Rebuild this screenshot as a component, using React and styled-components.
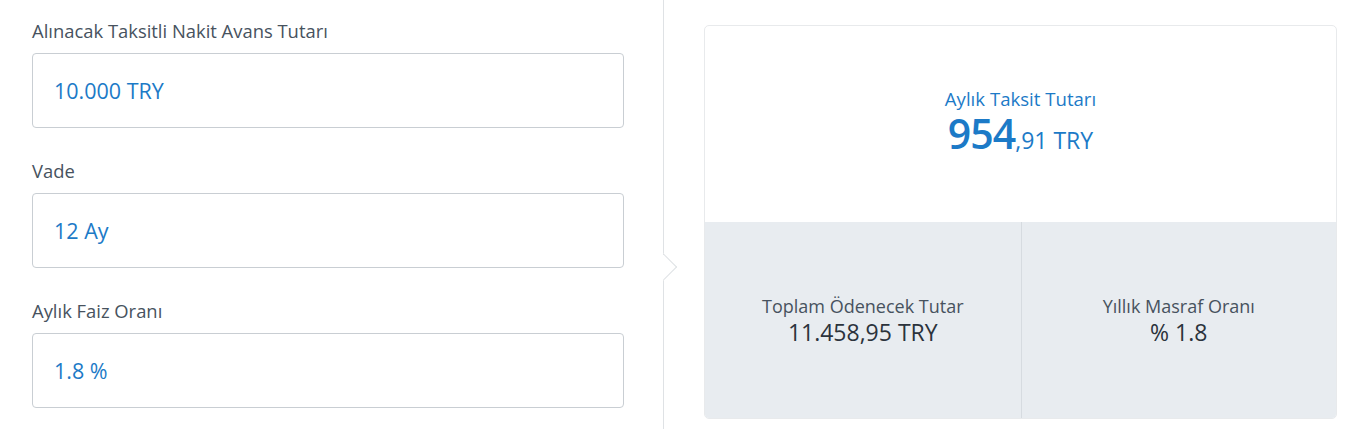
import styled, { createGlobalStyle } from 'styled-components'

const FIELDS = [
  { label: 'Alınacak Taksitli Nakit Avans Tutarı', value: '10.000 TRY' },
  { label: 'Vade', value: '12 Ay' },
  { label: 'Aylık Faiz Oranı', value: '1.8 %' },
]

const STATS = [
  { label: 'Toplam Ödenecek Tutar', value: '11.458,95 TRY' },
  { label: 'Yıllık Masraf Oranı', value: '% 1.8' },
]

const Global = createGlobalStyle`
  html, body {
    margin: 0;
    padding: 0;
    background: #fff;
    font-family: 'Open Sans', 'Noto Sans', sans-serif;
  }
  * { box-sizing: border-box; }
`

const Page = styled.div`
  display: flex;
  width: 1359px;
  height: 429px;
  overflow: hidden;
`

const Form = styled.div`
  position: relative;
  width: 664px;
  flex-shrink: 0;
  padding: 19px 39px 0 32px;
  border-right: 1px solid #dfe2e5;
  display: flex;
  flex-direction: column;
  gap: 31px;
`

const Pointer = styled.span`
  position: absolute;
  right: -14px;
  top: 253px;
  width: 14px;
  height: 28px;
  overflow: hidden;

  &::before {
    content: '';
    position: absolute;
    left: -10px;
    top: 4px;
    width: 19px;
    height: 19px;
    background: #fff;
    border-top: 1px solid #dfe2e5;
    border-right: 1px solid #dfe2e5;
    transform: rotate(45deg);
  }
`

const Field = styled.div`
  display: flex;
  flex-direction: column;
  gap: 10px;
`

const Label = styled.label`
  font-size: 18.4px;
  line-height: 24px;
  color: #47525e;
`

const Input = styled.div`
  height: 75px;
  border: 1px solid #c9ced3;
  border-radius: 4px;
  padding: 0 21px;
  display: flex;
  align-items: center;
  font-size: 21.5px;
  font-weight: 500;
  color: #1c7ac7;
`

const Side = styled.div`
  flex: 1;
  padding: 25px 22px 10px 40px;
`

const Card = styled.div`
  height: 394px;
  border: 1px solid #e8eaec;
  border-radius: 5px;
  overflow: hidden;
  display: grid;
  grid-template-rows: 196px 1fr;
`

const Hero = styled.div`
  display: flex;
  flex-direction: column;
  align-items: center;
  justify-content: center;
  padding-top: 2px;
  color: #1c7ac7;
`

const HeroLabel = styled.div`
  font-size: 18.6px;
  line-height: 22px;
`

const HeroValue = styled.div`
  font-size: 23px;
  line-height: 46px;
  font-weight: 500;

  b {
    font-size: 41px;
    font-weight: 600;
    letter-spacing: -1px;
  }
`

const Stats = styled.div`
  display: grid;
  grid-template-columns: 1fr 1fr;
  background: #e8ecf0;
`

const Stat = styled.div`
  display: flex;
  flex-direction: column;
  align-items: center;
  justify-content: center;
  & + & { border-left: 1px solid #d6dbe0; }
`

const StatLabel = styled.div`
  font-size: 18px;
  line-height: 24px;
  color: #47525e;
`

const StatValue = styled.div`
  font-size: 23px;
  line-height: 28px;
  font-weight: 500;
  color: #2b333c;
`

export default function App() {
  return (
    <Page>
      <Global />
      <Form>
        {FIELDS.map((f) => (
          <Field key={f.label}>
            <Label>{f.label}</Label>
            <Input>{f.value}</Input>
          </Field>
        ))}
        <Pointer />
      </Form>
      <Side>
        <Card>
          <Hero>
            <HeroLabel>Aylık Taksit Tutarı</HeroLabel>
            <HeroValue><b>954</b>,91 TRY</HeroValue>
          </Hero>
          <Stats>
            {STATS.map((s) => (
              <Stat key={s.label}>
                <StatLabel>{s.label}</StatLabel>
                <StatValue>{s.value}</StatValue>
              </Stat>
            ))}
          </Stats>
        </Card>
      </Side>
    </Page>
  )
}
